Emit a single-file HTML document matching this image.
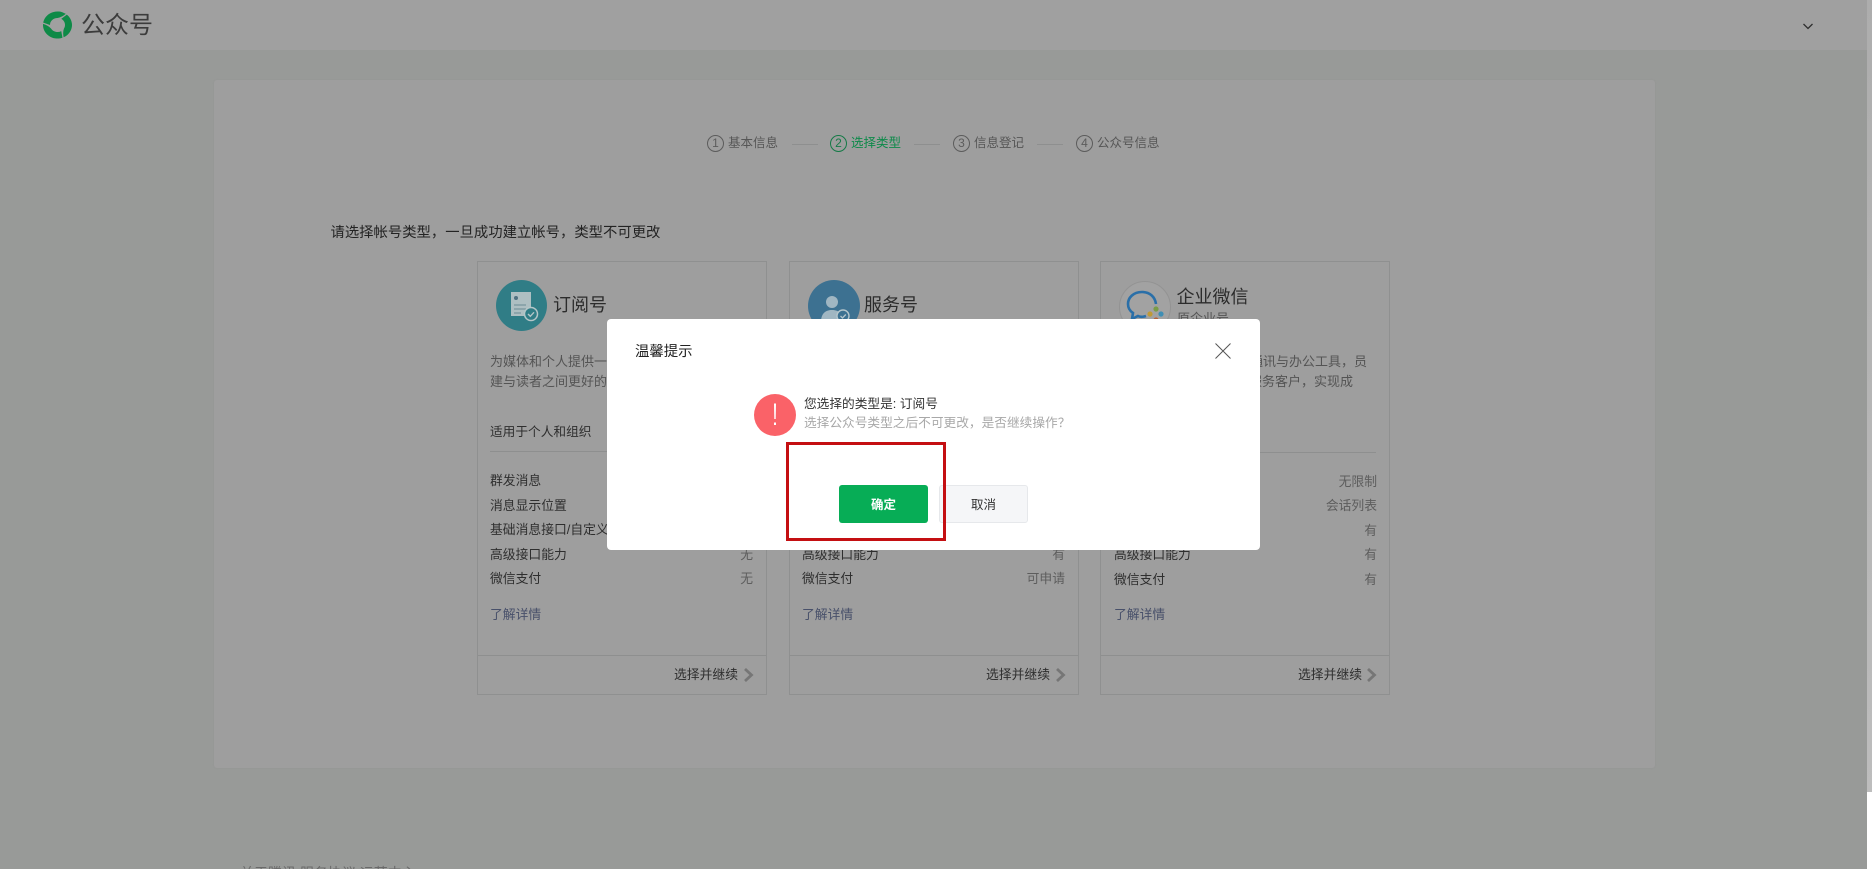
<!DOCTYPE html>
<html lang="zh">
<head>
<meta charset="utf-8">
<title>公众号</title>
<style>
html,body{margin:0;padding:0;width:1872px;height:869px;overflow:hidden;background:#989a98;}
body{position:relative;font-family:"Liberation Sans","Noto Sans CJK SC",sans-serif;font-size:12.8px;color:#2c2c2c;}
.a{position:absolute;white-space:nowrap;line-height:1;}
.b{position:absolute;box-sizing:border-box;}
.card{position:absolute;top:261px;width:290px;height:434px;border:1px solid #8f9090;box-sizing:border-box;}
.line{position:absolute;height:1px;background:#8e8f8f;}
.g{color:#5d5d5d;}
.d{color:#545454;}
.k{color:#2e2e2e;}
.lnk{color:#48506a;font-size:12.8px;}
.step{color:#565656;font-size:12.5px;}
.num{position:absolute;box-sizing:border-box;width:17px;height:17px;border:1px solid #5c5c5c;border-radius:50%;top:135px;text-align:center;font-size:12px;line-height:15px;color:#5c5c5c;}
</style>
</head>
<body>
<!-- header -->
<div class="b" style="left:0;top:0;width:1867px;height:50px;background:#a0a0a0;"></div>
<svg class="b" style="left:42px;top:11px;" width="31" height="28" viewBox="-15.5 -15 31 30" preserveAspectRatio="none">
  <g fill="#0e8a47" transform="rotate(20)">
    <path d="M-14.28 2.52A14.5 14.5 0 0 1 3.75 -14Q1 -9 -2.57 -7.05A7.5 7.5 0 0 0 -7.05 2.57Z"/>
    <path transform="rotate(120)" d="M-14.28 2.52A14.5 14.5 0 0 1 3.75 -14Q1 -9 -2.57 -7.05A7.5 7.5 0 0 0 -7.05 2.57Z"/>
    <path transform="rotate(240)" d="M-14.28 2.52A14.5 14.5 0 0 1 3.75 -14Q1 -9 -2.57 -7.05A7.5 7.5 0 0 0 -7.05 2.57Z"/>
  </g>
</svg>
<div class="a" style="left:81px;top:14px;font-size:24px;color:#3c3c3c;">公众号</div>
<svg class="b" style="left:1802px;top:22px;" width="12" height="9" viewBox="0 0 12 9"><path d="M1.5 2L6 6.5L10.5 2" fill="none" stroke="#2e2e2e" stroke-width="1.3"/></svg>

<!-- main panel -->
<div class="b" style="left:214px;top:80px;width:1441px;height:688px;background:#9e9e9e;border-radius:3px;box-shadow:0 0 2px #949494;"></div>

<!-- steps -->
<div class="num" style="left:707px;">1</div>
<div class="a step" style="left:728px;top:137px;">基本信息</div>
<div class="line" style="left:792px;top:144px;width:26px;"></div>
<div class="num" style="left:830px;border-color:#157a47;color:#157a47;">2</div>
<div class="a step" style="left:851px;top:137px;color:#0e8a4a;">选择类型</div>
<div class="line" style="left:914px;top:144px;width:26px;"></div>
<div class="num" style="left:953px;">3</div>
<div class="a step" style="left:974px;top:137px;">信息登记</div>
<div class="line" style="left:1037px;top:144px;width:26px;"></div>
<div class="num" style="left:1076px;">4</div>
<div class="a step" style="left:1097px;top:137px;">公众号信息</div>

<div class="a" style="left:330.5px;top:226px;font-size:14.35px;color:#232323;">请选择帐号类型&#65292;一旦成功建立帐号&#65292;类型不可更改</div>

<!-- cards -->
<div class="card" style="left:477px;"></div>
<div class="card" style="left:789px;"></div>
<div class="card" style="left:1100px;"></div>

<!-- card 1 -->
<svg class="b" style="left:496px;top:280px;" width="51" height="51" viewBox="0 0 51 51">
  <circle cx="25.5" cy="25.5" r="25.5" fill="#307d86"/>
  <path d="M15 12H35V36H15Z" fill="#aebfc2"/>
  <circle cx="20" cy="18" r="2" fill="#4f7180"/>
  <path d="M18 25H30M18 29H30M18 33H25" stroke="#6b8b94" stroke-width="1"/>
  <circle cx="35" cy="34" r="6.5" fill="#307d86" stroke="#b5c6c8" stroke-width="1.5"/>
  <path d="M32 34L34.3 36.3L38 32.3" fill="none" stroke="#b5c6c8" stroke-width="1.4"/>
</svg>
<div class="a" style="left:553px;top:296px;font-size:18px;color:#2c2c2c;">订阅号</div>
<div class="a d" style="left:490px;top:354.5px;font-size:13px;">为媒体和个人提供一种新的信息传播方式</div>
<div class="a d" style="left:490px;top:374.5px;font-size:13px;">建与读者之间更好的沟通与管理模式</div>
<div class="a k" style="left:490px;top:426px;font-size:12.7px;">适用于个人和组织</div>
<div class="line" style="left:490px;top:451px;width:263px;"></div>
<div class="a k" style="left:490px;top:474.5px;">群发消息</div>
<div class="a k" style="left:490px;top:499.5px;">消息显示位置</div>
<div class="a k" style="left:490px;top:523.5px;">基础消息接口/自定义菜单</div>
<div class="a k" style="left:490px;top:548.5px;">高级接口能力</div>
<div class="a k" style="left:490px;top:572.5px;">微信支付</div>
<div class="a g" style="right:1119px;top:548.5px;">无</div>
<div class="a g" style="right:1119px;top:572.5px;">无</div>
<div class="a lnk" style="left:490px;top:608.5px;">了解详情</div>
<div class="line" style="left:478px;top:655px;width:288px;"></div>
<div class="a k" style="left:674px;top:669px;">选择并继续</div>
<svg class="b" style="left:743px;top:668px;" width="11" height="14" viewBox="0 0 11 14"><path d="M2 1L8.5 7L2 13" fill="none" stroke="#767676" stroke-width="2.8"/></svg>

<!-- card 2 -->
<svg class="b" style="left:808px;top:280px;" width="52" height="52" viewBox="0 0 52 52">
  <circle cx="26" cy="26" r="26" fill="#3d7191"/>
  <circle cx="24" cy="22" r="6" fill="#a0b6c2"/>
  <path d="M13 42C13 33 18 30 24 30C30 30 35 33 35 42Z" fill="#a0b6c2"/>
  <circle cx="35" cy="36" r="6" fill="#3d7191" stroke="#b5c6cc" stroke-width="1.4"/>
  <path d="M32.5 36L34.5 38L37.8 34.5" fill="none" stroke="#b5c6cc" stroke-width="1.3"/>
</svg>
<div class="a" style="left:864px;top:296px;font-size:18px;color:#2c2c2c;">服务号</div>
<div class="line" style="left:802px;top:452px;width:263px;"></div>
<div class="a k" style="left:802px;top:548.5px;">高级接口能力</div>
<div class="a k" style="left:802px;top:572.5px;">微信支付</div>
<div class="a g" style="right:807px;top:548.5px;">有</div>
<div class="a g" style="right:807px;top:572.5px;">可申请</div>
<div class="a lnk" style="left:802px;top:608.5px;">了解详情</div>
<div class="line" style="left:790px;top:655px;width:288px;"></div>
<div class="a k" style="left:986px;top:669px;">选择并继续</div>
<svg class="b" style="left:1055px;top:668px;" width="11" height="14" viewBox="0 0 11 14"><path d="M2 1L8.5 7L2 13" fill="none" stroke="#767676" stroke-width="2.8"/></svg>

<!-- card 3 -->
<svg class="b" style="left:1119px;top:281px;" width="52" height="52" viewBox="0 0 52 52">
  <circle cx="26" cy="26" r="25.5" fill="#a2a2a2" stroke="#939393"/>
  <path d="M23 11C14 11 9 17 9 23C9 27 11 30 14 32L13 38L19 35C21 36 24 36 27 35" fill="none" stroke="#2a6fa8" stroke-width="2.6"/>
  <path d="M23 11C31 11 36 16 37 23" fill="none" stroke="#2a6fa8" stroke-width="2.6"/>
  <circle cx="37" cy="28" r="2.6" fill="#7a9c45"/>
  <circle cx="31" cy="33" r="2.6" fill="#c09a35"/>
  <circle cx="42" cy="33" r="2.6" fill="#3f8fb5"/>
  <circle cx="37" cy="39" r="2.6" fill="#b5623a"/>
</svg>
<div class="a" style="left:1176.5px;top:288px;font-size:18px;color:#2c2c2c;">企业微信</div>
<div class="a d" style="left:1177px;top:312px;font-size:13px;">原企业号</div>
<div class="a d" style="right:505px;top:354.5px;font-size:13px;">企业专属的通讯与办公工具&#65292;员</div>
<div class="a d" style="right:519px;top:374.5px;font-size:13px;">工可以轻松服务客户&#65292;实现成</div>
<div class="line" style="left:1114px;top:452px;width:262px;"></div>
<div class="a g" style="right:495px;top:475.5px;">无限制</div>
<div class="a g" style="right:495px;top:499.5px;">会话列表</div>
<div class="a g" style="right:495px;top:524.5px;">有</div>
<div class="a k" style="left:1114px;top:548.5px;">高级接口能力</div>
<div class="a k" style="left:1114px;top:573.5px;">微信支付</div>
<div class="a g" style="right:495px;top:548.5px;">有</div>
<div class="a g" style="right:495px;top:573.5px;">有</div>
<div class="a lnk" style="left:1114px;top:608.5px;">了解详情</div>
<div class="line" style="left:1101px;top:655px;width:288px;"></div>
<div class="a k" style="left:1298px;top:669px;">选择并继续</div>
<svg class="b" style="left:1366px;top:668px;" width="11" height="14" viewBox="0 0 11 14"><path d="M2 1L8.5 7L2 13" fill="none" stroke="#767676" stroke-width="2.8"/></svg>

<!-- footer clipped -->
<div class="a" style="left:240px;top:866px;font-size:14px;color:#6a6a6a;">关于腾讯 服务协议 运营中心</div>

<!-- scrollbar -->
<div class="b" style="left:1867px;top:0;width:5px;height:792px;background:linear-gradient(#adadad,#bdbdbd);"></div>
<div class="b" style="left:1867px;top:792px;width:5px;height:77px;background:#fff;"></div>

<!-- dialog -->
<div class="b" style="left:607px;top:319px;width:653px;height:231px;background:#fff;border-radius:4px;"></div>
<div class="a" style="left:635px;top:345px;font-size:14.4px;color:#222;">温馨提示</div>
<svg class="b" style="left:1215px;top:343px;" width="16" height="16" viewBox="0 0 16 16"><path d="M0.5 0.5L15.5 15.5M15.5 0.5L0.5 15.5" stroke="#555" stroke-width="1"/></svg>
<svg class="b" style="left:754px;top:394px;" width="42" height="42" viewBox="0 0 42 42">
  <circle cx="21" cy="21" r="21" fill="#fa6268"/>
  <path d="M20 9.5H22L21.7 25H20.3Z" fill="#fff"/>
  <rect x="20" y="28.5" width="2" height="2.5" fill="#fff"/>
</svg>
<div class="a" style="left:804px;top:398px;font-size:12.7px;color:#333;">您选择的类型是: 订阅号</div>
<div class="a" style="left:804px;top:417px;font-size:12.7px;color:#a8a8a8;">选择公众号类型之后不可更改&#65292;是否继续操作&#65311;</div>
<div class="b" style="left:839px;top:485px;width:89px;height:38px;background:#07ad56;border-radius:3px;color:#fff;text-align:center;line-height:40px;font-size:12.5px;font-weight:bold;">确定</div>
<div class="b" style="left:939px;top:485px;width:89px;height:38px;background:#f5f6f8;border:1px solid #e6e8eb;border-radius:3px;color:#333;text-align:center;line-height:38px;font-size:12.5px;">取消</div>
<div class="b" style="left:786px;top:442px;width:160px;height:99px;border:3px solid #c40f12;"></div>
</body>
</html>
